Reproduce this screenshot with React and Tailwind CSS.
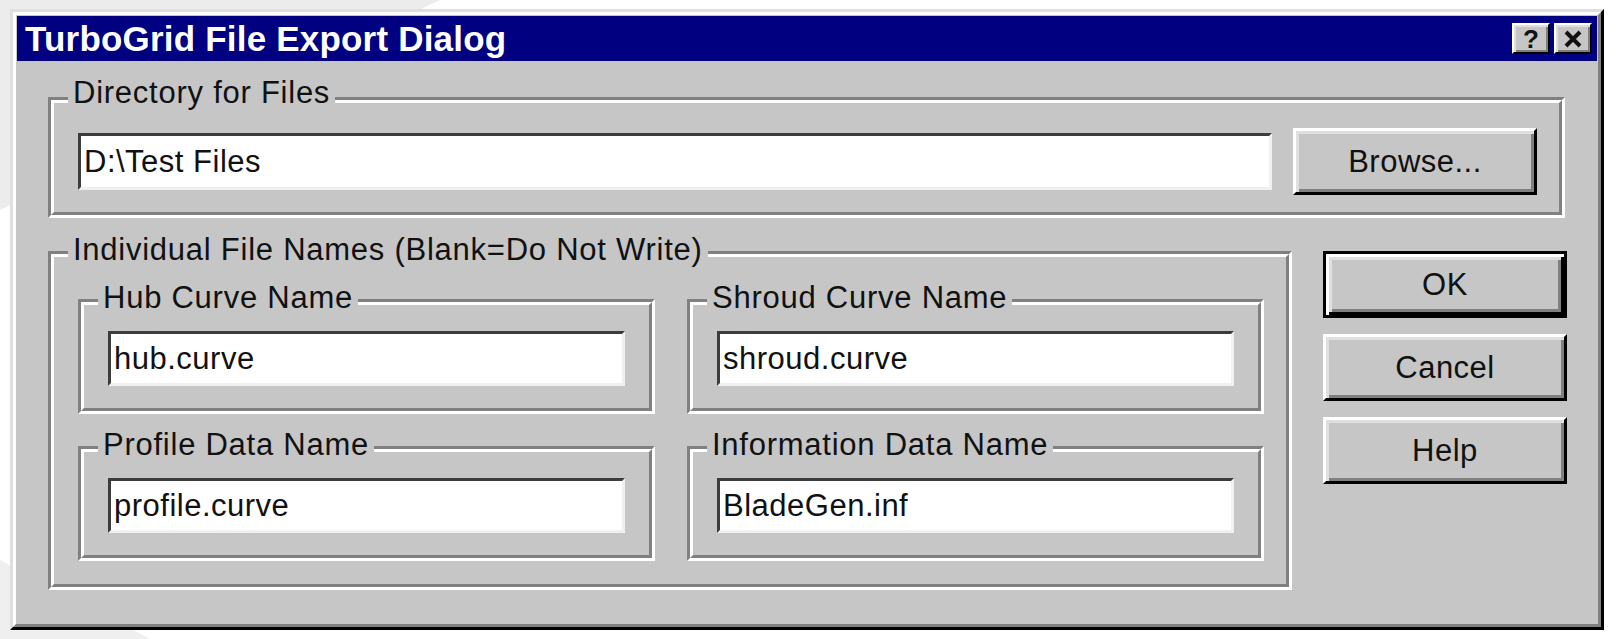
import React from 'react';

const face = 'bg-[#c6c6c6]';
const txt = "font-['Liberation_Sans',Arial,sans-serif] text-[31px] leading-[30px] tracking-[0.5px] text-[#111]";
const legendTxt = "font-['Liberation_Sans',Arial,sans-serif] text-[31px] leading-[30px] tracking-[0.75px] text-[#111]";

function GroupBox({ label, labelClass = 'top-[-19px]', innerClass = '', className = '', children }) {
  return (
    <div className={`relative border-3 border-t-[#808080] border-l-[#808080] border-b-white border-r-white ${className}`}>
      <div className={`border-3 border-t-white border-l-white border-b-[#808080] border-r-[#808080] ${innerClass}`}>
        {children}
      </div>
      {/* legend sits over the top edge */}
      <span className={`absolute left-[17px] ${labelClass} px-[5px] whitespace-nowrap ${face} ${legendTxt}`}>{label}</span>
    </div>
  );
}

function TextField({ value, h = 'h-[55px]' }) {
  return (
    <div className={`${h} w-full flex items-center bg-white border-3 border-t-[#3c3c3c] border-l-[#3c3c3c] border-b-[#f0f0f0] border-r-[#f0f0f0] pl-[3px] ${txt}`}>
      {value}
    </div>
  );
}

function Button({ children, isDefault = false, className = '' }) {
  const frame = isDefault
    ? 'border-3 border-black shadow-[inset_3px_3px_0_#ffffff,inset_-3px_-3px_0_#000000,inset_6px_6px_0_#dfdfdf,inset_-6px_-6px_0_#808080]'
    : 'border-3 border-t-white border-l-white border-b-black border-r-black shadow-[inset_3px_3px_0_#dfdfdf,inset_-3px_-3px_0_#808080]';
  return (
    <button className={`w-[244px] h-[67px] flex items-center justify-center ${face} ${frame} ${txt} ${className}`}>
      {children}
    </button>
  );
}

function CaptionButton({ children }) {
  return (
    <div className={`w-[38px] h-[31px] flex items-center justify-center ${face} border-2 border-t-white border-l-white border-b-black border-r-black shadow-[inset_2px_2px_0_#dfdfdf,inset_-2px_-2px_0_#808080]`}>
      {children}
    </div>
  );
}

export default function App() {
  return (
    <div className="relative w-[1621px] h-[639px] overflow-hidden bg-white pl-[10px] pt-[9px]">
      {/* faint backdrop shapes around the dialog */}
      <svg className="absolute inset-0" width="1621" height="639" viewBox="0 0 1621 639">
        <polygon points="0,0 440,0 0,210" fill="#ececec" />
        <polygon points="0,560 150,639 0,639" fill="#efefef" />
      </svg>

      <div className="relative w-[1594px] h-[621px] border-3 border-t-[#dfdfdf] border-l-[#dfdfdf] border-b-black border-r-black">
        <div className={`h-full flex flex-col p-px border-3 border-t-white border-l-white border-b-[#808080] border-r-[#808080] ${face}`}>
          {/* Title bar */}
          <div className="h-[45px] shrink-0 bg-[#000080] flex items-center pl-[8px] pr-[5px]">
            <span className="flex-1 font-['Liberation_Sans',Arial,sans-serif] text-[35px] leading-none font-bold tracking-[0.2px] text-white">
              TurboGrid File Export Dialog
            </span>
            <div className="flex gap-[4px]">
              <CaptionButton>
                <span className="font-['Liberation_Sans',Arial,sans-serif] text-[26px] font-bold leading-none text-[#111]">?</span>
              </CaptionButton>
              <CaptionButton>
                <svg width="20" height="18" viewBox="0 0 20 18">
                  <path d="M3 2 L17 16 M17 2 L3 16" stroke="#111" strokeWidth="4" />
                </svg>
              </CaptionButton>
            </div>
          </div>

          {/* Body */}
          <div className="flex-1 flex flex-col pt-[36px] pl-[31px] pr-[30px]">
            <GroupBox label="Directory for Files" labelClass="top-[-22px]" className="mr-[2px]" innerClass="flex items-center gap-[21px] pl-[24px] pr-[22px] pt-[25px] pb-[17px]">
              <div className="flex-1">
                <TextField value="D:\Test Files" h="h-[57px]" />
              </div>
              <Button>Browse...</Button>
            </GroupBox>

            <div className="flex gap-[31px] mt-[33px]">
              <GroupBox label="Individual File Names (Blank=Do Not Write)" className="flex-1" innerClass="grid grid-cols-2 gap-x-[32px] gap-y-[32px] pl-[24px] pr-[22px] pt-[42px] pb-[23px]">
                <GroupBox label="Hub Curve Name" innerClass="pl-[24px] pr-[24px] pt-[26px] pb-[22px]">
                  <TextField value="hub.curve" />
                </GroupBox>
                <GroupBox label="Shroud Curve Name" innerClass="pl-[24px] pr-[24px] pt-[26px] pb-[22px]">
                  <TextField value="shroud.curve" />
                </GroupBox>
                <GroupBox label="Profile Data Name" innerClass="pl-[24px] pr-[24px] pt-[26px] pb-[22px]">
                  <TextField value="profile.curve" />
                </GroupBox>
                <GroupBox label="Information Data Name" innerClass="pl-[24px] pr-[24px] pt-[26px] pb-[22px]">
                  <TextField value="BladeGen.inf" />
                </GroupBox>
              </GroupBox>

              <div className="flex flex-col gap-[16px]">
                <Button isDefault>OK</Button>
                <Button>Cancel</Button>
                <Button>Help</Button>
              </div>
            </div>
          </div>
        </div>
      </div>
    </div>
  );
}
